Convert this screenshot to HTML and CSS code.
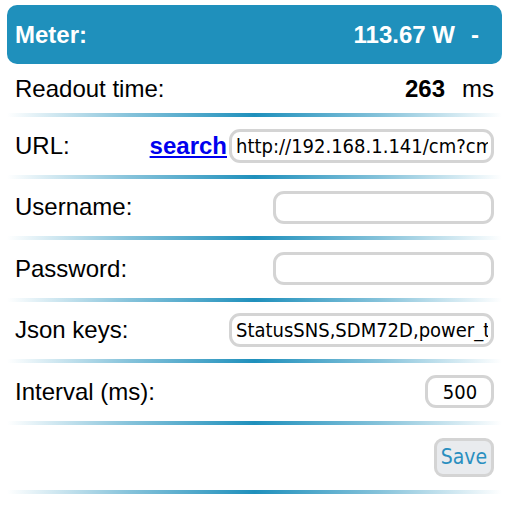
FILE: index.html
```html
<!DOCTYPE html>
<html>
<head>
<meta charset="utf-8">
<link rel="stylesheet" href="styles.css">
</head>
<body>
<div class="panel">
  <div class="header">
    <span class="title">Meter:</span>
    <span class="power"><span class="pval">113.67 W</span><span class="dash">-</span></span>
  </div>
  <div class="row row-readout">
    <span class="label">Readout time:</span>
    <span class="readout"><b class="rval">263</b><span class="unit">ms</span></span>
  </div>
  <div class="sep"></div>
  <div class="row">
    <span class="label">URL:</span>
    <span class="group">
      <a class="search" href="#">search</a>
      <input class="field wide" type="text" value="http://192.168.1.141/cm?cmnd=status%2010">
    </span>
  </div>
  <div class="sep"></div>
  <div class="row">
    <span class="label">Username:</span>
    <input class="field mid" type="text" value="">
  </div>
  <div class="sep"></div>
  <div class="row">
    <span class="label">Password:</span>
    <input class="field mid" type="password" value="">
  </div>
  <div class="sep"></div>
  <div class="row">
    <span class="label">Json keys:</span>
    <input class="field wide" type="text" value="StatusSNS,SDM72D,power_total">
  </div>
  <div class="sep"></div>
  <div class="row">
    <span class="label">Interval (ms):</span>
    <input class="field small" type="text" value="500">
  </div>
  <div class="sep"></div>
  <div class="row row-save">
    <span></span>
    <button class="save" type="button">Save</button>
  </div>
  <div class="sep"></div>
</div>
</body>
</html>
```
FILE: styles.css
```css
html, body {
  margin: 0;
  padding: 0;
  background: #ffffff;
}
body {
  font-family: "Liberation Sans", Arial, sans-serif;
  font-size: 24px;
  color: #000;
}
.panel {
  margin: 5px 9px 0 7px;
  width: 495px;
}
.header {
  height: 59px;
  background: #1f90bc;
  border-radius: 10px;
  color: #fff;
  font-weight: bold;
  display: flex;
  align-items: center;
  justify-content: space-between;
  padding: 0 23px 0 8px;
  box-sizing: border-box;
}
.dash {
  margin-left: 16px;
}
.row {
  height: 57.5px;
  display: flex;
  align-items: center;
  justify-content: space-between;
  padding: 0 8px;
}
.row-readout {
  height: 49px;
}
.row-save {
  height: 65px;
}
.readout {
  display: flex;
  align-items: baseline;
}
.unit {
  margin-left: 17px;
}
.sep {
  height: 4px;
  background: linear-gradient(to right, rgba(31,144,188,0) 0%, rgba(31,144,188,0.55) 25%, #1f90bc 50%, rgba(31,144,188,0.55) 75%, rgba(31,144,188,0) 100%);
}
.group {
  display: flex;
  align-items: center;
  gap: 2px;
}
.search {
  color: #0000ee;
  font-weight: bold;
  text-decoration: underline;
}
.field {
  box-sizing: border-box;
  height: 34px;
  border: 3px solid #d4d4d4;
  border-radius: 11px;
  padding: 0 3px 0 4px;
  font-family: "DejaVu Sans Condensed", "DejaVu Sans", sans-serif;
  font-size: 20px;
  color: #000;
  background: #fff;
  outline: none;
}
.wide {
  width: 265px;
}
.mid {
  width: 221px;
  height: 33px;
}
.small {
  width: 69px;
  height: 33px;
  text-align: center;
}
.save {
  box-sizing: border-box;
  width: 60px;
  height: 39px;
  border: 3px solid #d4d4d4;
  border-radius: 9px;
  background: #e9ebee;
  color: #2a8fc0;
  font-family: "DejaVu Sans Condensed", "DejaVu Sans", sans-serif;
  font-size: 21px;
  padding: 0;
}
```
